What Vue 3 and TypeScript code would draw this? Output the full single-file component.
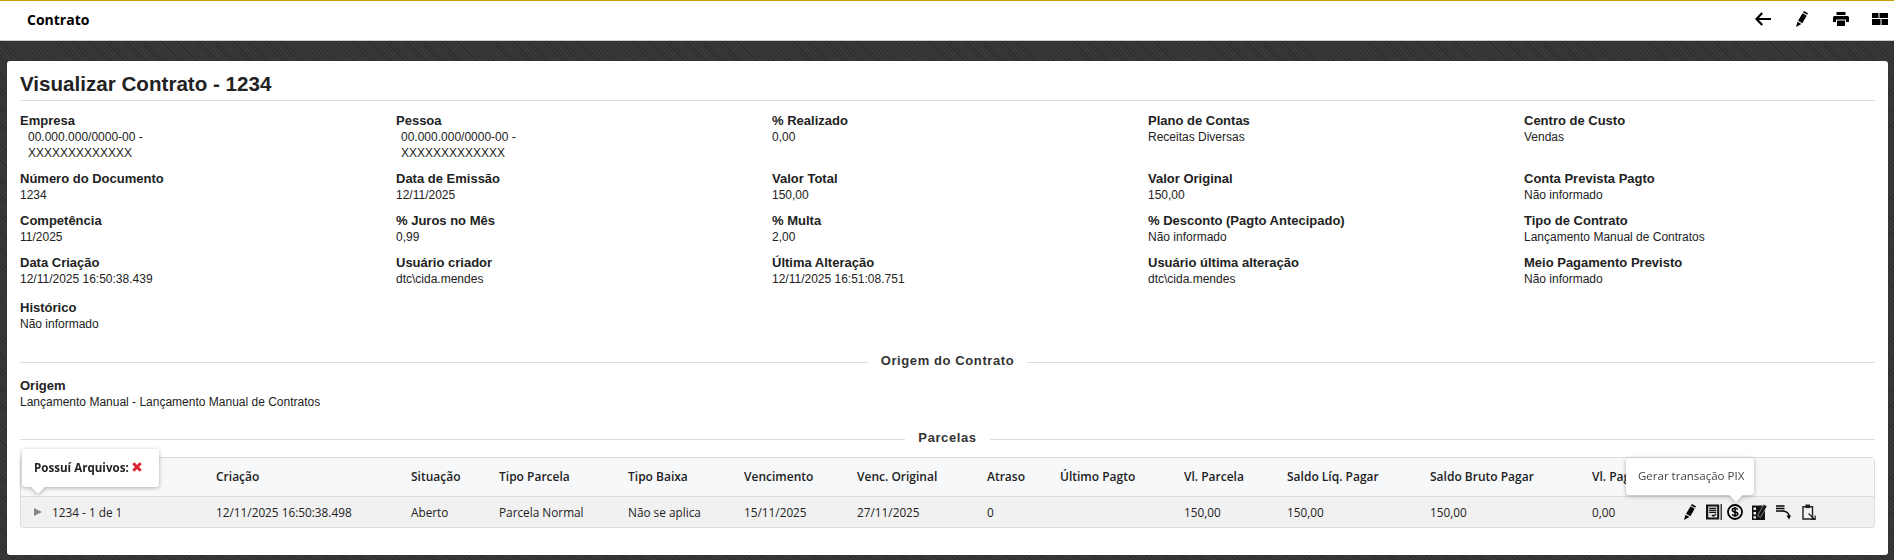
<script setup lang="ts">
interface Field { label: string; value: string; indent?: string; extra?: boolean }
const fields: Field[] = [
  { label: 'Empresa', value: '00.000.000/0000-00 - XXXXXXXXXXXXX', indent: 'indent-wide' },
  { label: 'Pessoa', value: '00.000.000/0000-00 - XXXXXXXXXXXXX', indent: 'indent-narrow' },
  { label: '% Realizado', value: '0,00' },
  { label: 'Plano de Contas', value: 'Receitas Diversas' },
  { label: 'Centro de Custo', value: 'Vendas' },
  { label: 'Número do Documento', value: '1234' },
  { label: 'Data de Emissão', value: '12/11/2025' },
  { label: 'Valor Total', value: '150,00' },
  { label: 'Valor Original', value: '150,00' },
  { label: 'Conta Prevista Pagto', value: 'Não informado' },
  { label: 'Competência', value: '11/2025' },
  { label: '% Juros no Mês', value: '0,99' },
  { label: '% Multa', value: '2,00' },
  { label: '% Desconto (Pagto Antecipado)', value: 'Não informado' },
  { label: 'Tipo de Contrato', value: 'Lançamento Manual de Contratos' },
  { label: 'Data Criação', value: '12/11/2025 16:50:38.439' },
  { label: 'Usuário criador', value: 'dtc\\cida.mendes' },
  { label: 'Última Alteração', value: '12/11/2025 16:51:08.751' },
  { label: 'Usuário última alteração', value: 'dtc\\cida.mendes' },
  { label: 'Meio Pagamento Previsto', value: 'Não informado' },
  { label: 'Histórico', value: 'Não informado', extra: true },
]
const columns = [
  { head: '', cell: '1234 - 1 de 1', w: 164 },
  { head: 'Criação', cell: '12/11/2025 16:50:38.498', w: 195 },
  { head: 'Situação', cell: 'Aberto', w: 88 },
  { head: 'Tipo Parcela', cell: 'Parcela Normal', w: 129 },
  { head: 'Tipo Baixa', cell: 'Não se aplica', w: 116 },
  { head: 'Vencimento', cell: '15/11/2025', w: 113 },
  { head: 'Venc. Original', cell: '27/11/2025', w: 130 },
  { head: 'Atraso', cell: '0', w: 73 },
  { head: 'Último Pagto', cell: '', w: 124 },
  { head: 'Vl. Parcela', cell: '150,00', w: 103 },
  { head: 'Saldo Líq. Pagar', cell: '150,00', w: 143 },
  { head: 'Saldo Bruto Pagar', cell: '150,00', w: 162 },
  { head: 'Vl. Pago', cell: '0,00', w: 91 },
]
const gridTemplate = columns.map((c) => c.w + 'px').join(' ') + ' 1fr'
</script>

<template>
  <div class="page">
    <header class="topbar">
      <span class="topbar-title">Contrato</span>
      <div class="topbar-icons">
        <svg width="16" height="14" viewBox="0 0 16 14"><path d="M7.200 1 1.500 7l5.700 6M2 7h14" fill="none" stroke="#000" stroke-width="2.200"/></svg>
        <svg width="12" height="16" viewBox="0 0 12 16"><path d="M7.800 0 12 2.300l-.8 1.400L7 1.400zM6.500 2.300l4.200 2.400-4.400 7.500-4.200-2.400zM1.500 10.700l3.900 2.200L0 16z" fill="#000"/></svg>
        <svg width="16" height="14" viewBox="0 0 16 14"><path d="M3.500 0h9v3h-9zM1.500 4h13q1.500 0 1.500 1.500V10h-3V7.500H3V10H0V5.500Q0 4 1.500 4zM4 8.500h8V14H4z" fill="#000"/></svg>
        <svg class="ico-layout" width="16" height="12" viewBox="0 0 16 12"><path d="M0 0h6.500v5H0zM7.500 0H16v5H7.500zM0 6h8.500v6H0zM9.500 6H16v6H9.500z" fill="#000"/></svg>
      </div>
    </header>
    <main class="content">
      <section class="card">
        <h1 class="title">Visualizar Contrato - 1234</h1>
        <div class="fields">
          <div v-for="f in fields" :key="f.label" class="field" :class="{ extra: f.extra }">
            <div class="label">{{ f.label }}</div>
            <div class="value" :class="f.indent">{{ f.value }}</div>
          </div>
        </div>
        <div class="divider origem"><span>Origem do Contrato</span></div>
        <div class="field single">
          <div class="label">Origem</div>
          <div class="value">Lançamento Manual - Lançamento Manual de Contratos</div>
        </div>
        <div class="divider parcelas"><span>Parcelas</span></div>
        <div class="table">
          <div class="thead" :style="{ gridTemplateColumns: gridTemplate }">
            <div v-for="c in columns" :key="c.head" class="th">{{ c.head }}</div>
            <div></div>
          </div>
          <div class="tbody" :style="{ gridTemplateColumns: gridTemplate }">
            <div v-for="(c, i) in columns" :key="c.head" class="td" :class="{ first: i === 0 }">
              <span v-if="i === 0" class="caret"></span>{{ c.cell }}
            </div>
            <div class="actions">
              <svg width="12" height="16" viewBox="0 0 12 16"><path d="M7.800 0 12 2.300l-.8 1.400L7 1.400zM6.500 2.300l4.200 2.400-4.400 7.500-4.200-2.400zM1.500 10.700l3.900 2.200L0 16z" fill="#000"/></svg>
              <svg class="a-note" width="16" height="16" viewBox="0 0 16 16"><path d="M0 .5h13.200v15H0z" fill="#111"/><path d="M2.200 2.500h9v11h-9z" fill="#ddd"/><path d="M3.200 4.400h7M3.200 6.400h7M3.200 8.400h7" stroke="#111" stroke-width="1.200"/><path d="M6 11l1.500 1.300L10 10" fill="none" stroke="#111" stroke-width="1.200"/><path d="M15.200 0v16" stroke="#111" stroke-width="1.200"/></svg>
              <svg class="a-dollar" width="16" height="16" viewBox="0 0 16 16"><circle cx="8" cy="8" r="7" fill="none" stroke="#000" stroke-width="1.800"/><path d="M10.800 5.600Q10 4.300 8 4.300 5.300 4.300 5.300 6t2.700 2 2.800 2Q10.800 11.700 8 11.700 6 11.700 5.200 10.400M8 2.900v10.200" fill="none" stroke="#000" stroke-width="1.500"/></svg>
              <svg width="15" height="16" viewBox="0 0 15 16"><path d="M0 1.500h13V16H0z" fill="#111"/><path d="M1.500 3.500h2.500V6H1.500zM1.500 8h2.500v2.500H1.500zM1.500 12.200h2.500v2.300H1.500z" fill="#eee"/><path d="M5.500 11.700 11.800.5 15 2.200 8.600 13.300z" fill="#111" stroke="#ccc" stroke-width=".6"/></svg>
              <svg width="15" height="15" viewBox="0 0 15 15"><path d="M0 1h8.500M0 3.500h8.500M0 6h8.500" stroke="#000" stroke-width="1.300"/><path d="M7.500 6.300q4.800.2 5.800 5" fill="none" stroke="#000" stroke-width="1.400"/><path d="M10.500 10.500H15L13 14.500z" fill="#000"/></svg>
              <svg class="a-clip" width="14" height="16" viewBox="0 0 14 16"><path d="M1 2.800h9.500V15H1z" fill="none" stroke="#222" stroke-width="1.400"/><path d="M3.500.5h4.500v3.600H3.500z" fill="#222"/><path d="M6.500 9.500l6 5.700M13.200 11.500v4.200H9" fill="none" stroke="#222" stroke-width="1.200"/></svg>
            </div>
          </div>
        </div>
        <div class="tip tip-files">
          <b>Possuí Arquivos:</b>
          <svg width="10" height="10" viewBox="0 0 10 10"><path d="M1.300 1.300l7.400 7.400M8.700 1.300 1.300 8.700" stroke="#d9232e" stroke-width="2.900"/></svg>
        </div>
        <div class="tip tip-pix">Gerar transação PIX</div>
      </section>
    </main>
  </div>
</template>

<style>
html, body { margin: 0; }
</style>

<style scoped>
.page { width: 1894px; height: 560px; overflow: hidden; display: flex; flex-direction: column; font-family: "Liberation Sans", Arial, sans-serif; color: #222; }
.topbar { height: 41px; box-sizing: border-box; border-top: 1px solid #c9a100; border-bottom: 1px solid #ccc; background: #fff; display: flex; align-items: center; justify-content: space-between; padding: 0 6px 3px 27px; flex: none; }
.topbar-title { font-family: "Open Sans", sans-serif; font-weight: 700; font-size: 14px; color: #000; }
.topbar-icons { display: flex; align-items: center; gap: 25px; }
.ico-layout { margin-left: -2px; }
.content { flex: 1; min-height: 0; padding: 20px 6px 5px 7px; background-color: #333; background-image: repeating-linear-gradient(45deg, #2e2e2e 0 1px, #393939 1px 3px); }
.card { position: relative; background: #fff; border-radius: 3px; height: 100%; box-sizing: border-box; padding: 0 13px; width: 1881px; }
.title { margin: 0; font-size: 20.6px; font-weight: 700; line-height: 24px; padding: 11px 0 4px; border-bottom: 1px solid #ddd; color: #222; }
.fields { display: grid; grid-template-columns: repeat(5, 376px); padding-top: 11px; }
.field { padding-bottom: 9px; }
.field.extra { margin-top: 3px; }
.label { font-size: 13px; line-height: 17px; font-weight: 700; color: #222; }
.value { font-size: 12px; line-height: 16px; color: #222; max-width: 190px; }
.value.indent-wide { padding-left: 8px; }
.value.indent-narrow { padding-left: 5px; }
.single .value { max-width: none; }
.divider { display: flex; align-items: center; gap: 13px; height: 15px; font-size: 13px; font-weight: 700; letter-spacing: .6px; color: #333; }
.divider span { margin-bottom: 4px; }
.divider::before, .divider::after { content: ""; flex: 1; border-top: 1px solid #ddd; }
.divider.origem { margin-top: 14px; margin-bottom: 7px; }
.divider.parcelas { margin-top: 13px; margin-bottom: 10px; }
.table { border: 1px solid #ddd; border-radius: 3px; font-family: "Open Sans", sans-serif; font-size: 11.8px; color: #222; }
.thead { display: grid; box-sizing: border-box; height: 39px; padding-bottom: 1px; align-items: center; background: #f7f8fa; border-bottom: 1px solid #ddd; }
.th { font-size: 12px; font-weight: 600; white-space: nowrap; }
.tbody { display: grid; height: 30px; align-items: center; background: #f1f1f1; }
.td { white-space: nowrap; }
.thead, .tbody { padding-left: 31px; }
.td.first { position: relative; }
.caret { position: absolute; left: -18px; top: 50%; margin-top: -4px; border-left: 8px solid #888; border-top: 4.500px solid transparent; border-bottom: 4.500px solid transparent; }
.actions { display: flex; align-items: center; gap: 9px; padding-left: 1px; }
.a-note { margin-left: 1px; }
.a-dollar { margin-left: -4px; }
.a-clip { margin-left: 2px; }
.tip { position: absolute; background: #fff; border-radius: 3px; filter: drop-shadow(0 1px 2px rgba(0,0,0,.3)); font-family: "Open Sans", sans-serif; font-size: 11.5px; white-space: nowrap; }
.tip::after { content: ""; position: absolute; top: 100%; width: 0; height: 0; border-left: 7px solid transparent; border-right: 7px solid transparent; border-top: 7px solid #fff; }
.tip-files { left: 15px; top: 388px; width: 137px; height: 38px; box-sizing: border-box; padding: 0 12px 2px; display: flex; align-items: center; gap: 3px; color: #222; }
.tip-files b { font-weight: 700; font-size: 11.6px; }
.tip-files::after { left: 9px; }
.tip-pix { left: 1619px; top: 397px; width: 128px; height: 37px; box-sizing: border-box; padding: 0 12px; line-height: 36px; color: #444; }
.tip-pix::after { left: 103px; }
</style>
